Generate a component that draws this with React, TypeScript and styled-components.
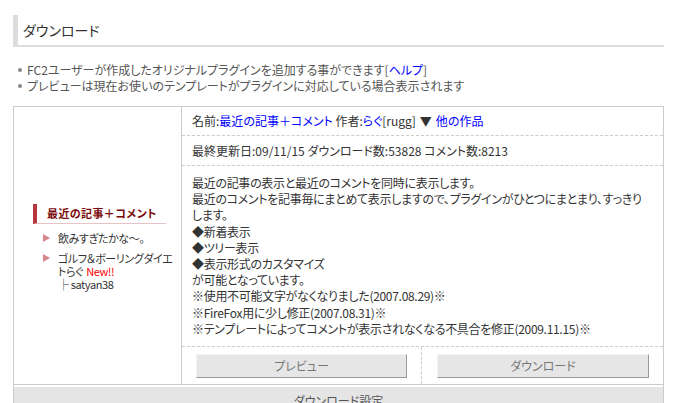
import styled, { createGlobalStyle } from 'styled-components';

const GlobalStyle = createGlobalStyle`
  html, body {
    margin: 0;
    padding: 0;
    background: #fff;
  }
  body {
    font-family: "Noto Sans CJK JP", "DejaVu Sans", sans-serif;
    font-feature-settings: "palt";
    font-size: 12px;
    color: #333;
  }
`;

const Page = styled.div`
  padding: 15px 12px 0 13px;
`;

const Heading = styled.h2`
  margin: 0;
  height: 30px;
  line-height: 30px;
  padding-left: 5px;
  border-left: 5px solid #ddd;
  border-bottom: 2px solid #ddd;
  font-size: 14px;
  font-weight: normal;
  color: #333;
`;

const Notes = styled.ul`
  margin: 15px 0 12px;
  padding: 0;
  list-style: none;
`;

const Note = styled.li`
  position: relative;
  padding-left: 14px;
  line-height: 16px;
  color: #555;

  &::before {
    content: '';
    position: absolute;
    left: 5px;
    top: 6px;
    width: 4px;
    height: 4px;
    border-radius: 50%;
    background: #888;
  }
`;

const Link = styled.a`
  color: #00f;
  text-decoration: none;
`;

const Table = styled.div`
  display: grid;
  grid-template-columns: 168px 1fr;
  border: 1px solid #ccc;
  border-bottom: none;
`;

const PreviewCell = styled.div`
  display: flex;
  align-items: center;
  border-right: 1px solid #ccc;
`;

const Widget = styled.div`
  width: 133px;
  margin-left: 19px;
  margin-top: 4px;
`;

const WidgetTitle = styled.div`
  height: 19px;
  line-height: 19px;
  padding-left: 10px;
  border-left: 4px solid #b5373c;
  border-bottom: 1px solid #e6c4c6;
  color: #7a0a0a;
  font-size: 11px;
  font-weight: bold;
  letter-spacing: 0.4px;
`;

const WidgetList = styled.ul`
  margin: 8px 0 0;
  padding: 0;
  list-style: none;
`;

const WidgetItem = styled.li`
  position: relative;
  padding-left: 25px;
  margin-bottom: 7px;
  line-height: 13px;
  font-size: 11px;
  letter-spacing: -0.4px;
  white-space: nowrap;
  color: #333;

  &:last-child {
    margin-bottom: 0;
  }

  &::before {
    content: '';
    position: absolute;
    left: 10px;
    top: 2px;
    border-left: 7px solid #d9868c;
    border-top: 4px solid transparent;
    border-bottom: 4px solid transparent;
  }
`;

const NewMark = styled.span`
  color: #f00;
  margin-left: 3px;
`;

const InfoColumn = styled.div`
  display: flex;
  flex-direction: column;
`;

const InfoRow = styled.div<{ $h: number }>`
  min-height: ${(p) => p.$h}px;
  display: flex;
  align-items: center;
  padding: 0 10px;
  border-bottom: 1px dashed #ccc;
  line-height: 16px;
`;

const Description = styled.div`
  padding: 9px 10px;
  line-height: 16.2px;
  letter-spacing: -0.3px;
  white-space: nowrap;
  border-bottom: 1px dashed #ccc;
`;

const Arrow = styled.span`
  color: #333;
  margin: 0 4px;
`;

const Actions = styled.div`
  display: grid;
  grid-template-columns: 239px 1fr;
  height: 37px;
`;

const ActionCell = styled.div<{ $divider?: boolean }>`
  display: flex;
  align-items: center;
  padding: 0 14px 0 ${(p) => (p.$divider ? 15 : 14)}px;
  ${(p) => (p.$divider ? 'border-left: 1px dashed #ccc;' : '')}
`;

const Button = styled.button`
  width: 100%;
  height: 24px;
  padding: 0;
  background: #e6e6e6;
  border: 1px solid;
  border-color: #f4f4f4 #999 #999 #f4f4f4;
  font-family: inherit;
  font-feature-settings: "palt";
  font-size: 12px;
  color: #777;
`;

const SettingsRow = styled.div`
  grid-column: 1 / -1;
  border-top: 1px solid #ccc;
  padding: 2px 0 0 0;
`;

const SettingsBar = styled.div`
  height: 28px;
  line-height: 28px;
  text-align: center;
  background: #e5e5e5;
  color: #555;
`;

export default function App() {
  return (
    <>
      <GlobalStyle />
      <Page>
        <Heading>ダウンロード</Heading>
        <Notes>
          <Note>
            FC2ユーザーが作成したオリジナルプラグインを追加する事ができます[<Link href="#">ヘルプ</Link>]
          </Note>
          <Note>プレビューは現在お使いのテンプレートがプラグインに対応している場合表示されます</Note>
        </Notes>
        <Table>
          <PreviewCell>
            <Widget>
              <WidgetTitle>最近の記事＋コメント</WidgetTitle>
              <WidgetList>
                <WidgetItem>飲みすぎたかな～。</WidgetItem>
                <WidgetItem>
                  ゴルフ＆ボーリングダイエ
                  <br />
                  トらぐ<NewMark>New!!</NewMark>
                  <br />├ satyan38
                </WidgetItem>
              </WidgetList>
            </Widget>
          </PreviewCell>
          <InfoColumn>
            <InfoRow $h={28}>
              <span>
                名前:<Link href="#">最近の記事＋コメント</Link> 作者:<Link href="#">らぐ</Link>[rugg]
                <Arrow>▼</Arrow>
                <Link href="#">他の作品</Link>
              </span>
            </InfoRow>
            <InfoRow $h={29}>最終更新日:09/11/15 ダウンロード数:53828 コメント数:8213</InfoRow>
            <Description>
              最近の記事の表示と最近のコメントを同時に表示します。
              <br />
              最近のコメントを記事毎にまとめて表示しますので、プラグインがひとつにまとまり、すっきり
              <br />
              します。
              <br />◆新着表示
              <br />◆ツリー表示
              <br />◆表示形式のカスタマイズ
              <br />が可能となっています。
              <br />※使用不可能文字がなくなりました(2007.08.29)※
              <br />※FireFox用に少し修正(2007.08.31)※
              <br />※テンプレートによってコメントが表示されなくなる不具合を修正(2009.11.15)※
            </Description>
            <Actions>
              <ActionCell>
                <Button>プレビュー</Button>
              </ActionCell>
              <ActionCell $divider>
                <Button>ダウンロード</Button>
              </ActionCell>
            </Actions>
          </InfoColumn>
          <SettingsRow>
            <SettingsBar>ダウンロード設定</SettingsBar>
          </SettingsRow>
        </Table>
      </Page>
    </>
  );
}
